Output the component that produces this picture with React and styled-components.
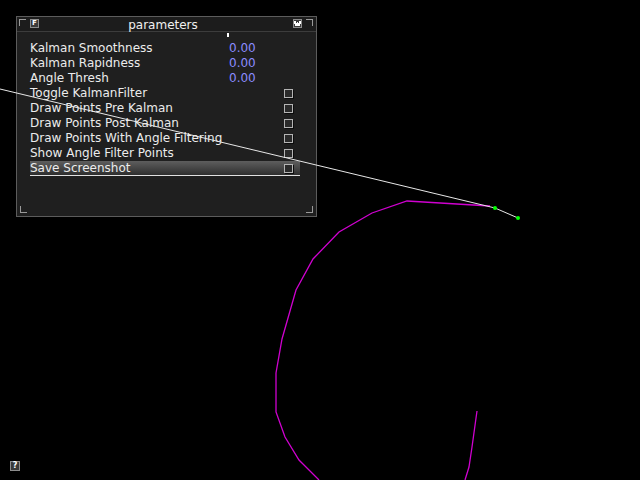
import styled, { createGlobalStyle } from "styled-components";

const GlobalStyle = createGlobalStyle`
  html, body {
    margin: 0;
    padding: 0;
    background: #000;
  }
  body {
    font-family: "DejaVu Sans", "Liberation Sans", sans-serif;
  }
`;

const params = [
  { label: "Kalman Smoothness", value: "0.00" },
  { label: "Kalman Rapidness", value: "0.00" },
  { label: "Angle Thresh", value: "0.00" },
  { label: "Toggle KalmanFilter", check: true },
  { label: "Draw Points Pre Kalman", check: true },
  { label: "Draw Points Post Kalman", check: true },
  { label: "Draw Points With Angle Filtering", check: true },
  { label: "Show Angle Filter Points", check: true },
  { label: "Save Screenshot", check: true, active: true },
];

const curveTop =
  "490,206 407,201 372,213 339,232 313,259 296,290 282,339 276,373 276,412 285,437 299,460 319,480";
const curveRight = "477,411 472,447 469,467 465,480";

export default function App() {
  return (
    <Desktop>
      <GlobalStyle />
      <Panel>
        <Header>
          <Corner $pos="tl" />
          <TinyButton>F</TinyButton>
          <Title>parameters</Title>
          <TinyButton>
            <svg width="7" height="5" viewBox="0 0 7 5">
              <path d="M0 0h2v2h1v-1h1v1h1v-2h2v3h-1v2h-5v-2h-1z" fill="#fff" />
            </svg>
          </TinyButton>
          <Corner $pos="tr" />
        </Header>
        <Tick />
        <List>
          {params.map((p) => (
            <Row key={p.label} $active={p.active}>
              <Label>{p.label}</Label>
              {p.value && <Value>{p.value}</Value>}
              {p.check && <Check />}
            </Row>
          ))}
        </List>
        <Footer>
          <Corner $pos="bl" />
          <Corner $pos="br" />
        </Footer>
      </Panel>
      <HelpButton>?</HelpButton>
      <Drawing width="640" height="480" viewBox="0 0 640 480">
        <polyline points={curveTop} fill="none" stroke="#d000d0" strokeWidth="1.3" />
        <polyline points={curveRight} fill="none" stroke="#d000d0" strokeWidth="1.3" />
        <polyline points="0,89 495,208 518,218" fill="none" stroke="#e8e8e8" strokeWidth="1" />
        <circle cx="495" cy="208" r="2" fill="#00ff00" />
        <circle cx="518" cy="218" r="2" fill="#00ff00" />
      </Drawing>
    </Desktop>
  );
}

const Desktop = styled.div`
  position: relative;
  width: 640px;
  height: 480px;
  background: #000;
  overflow: hidden;
`;

const Panel = styled.div`
  position: absolute;
  left: 16px;
  top: 16px;
  width: 301px;
  height: 201px;
  box-sizing: border-box;
  border: 1px solid #5c5c5c;
  background: #1f1f1f;
  display: flex;
  flex-direction: column;
  color: #ececec;
  font-size: 12px;
`;

const Header = styled.div`
  height: 14px;
  display: flex;
  align-items: flex-start;
  padding: 0 3px 0 2px;
  border-bottom: 1px solid #3c3c3c;
  background: #1c1c1c;
`;

const Corner = styled.span`
  width: 7px;
  height: 7px;
  box-sizing: border-box;
  border-color: #9a9a9a;
  border-style: solid;
  border-width: ${({ $pos }) =>
    $pos === "tl"
      ? "1px 0 0 1px"
      : $pos === "tr"
      ? "1px 1px 0 0"
      : $pos === "bl"
      ? "0 0 1px 1px"
      : "0 1px 1px 0"};
  margin-top: ${({ $pos }) => ($pos === "tl" || $pos === "tr" ? "2px" : "0")};
  flex: none;
`;

const TinyButton = styled.span`
  width: 9px;
  height: 9px;
  box-sizing: border-box;
  border: 1px solid #8c8c8c;
  background: #3a3a3a;
  color: #fff;
  font-size: 7px;
  font-weight: bold;
  line-height: 7px;
  display: flex;
  align-items: center;
  justify-content: center;
  margin: 2px 4px 0 6px;
  flex: none;

  &:nth-of-type(2) {
    margin: 2px 8px 0 4px;
  }
`;

const Title = styled.span`
  flex: 1;
  text-align: center;
  color: #f0f0f0;
  font-size: 12px;
  line-height: 14px;
  padding: 1px 8px 0 0;
`;

const Tick = styled.span`
  position: absolute;
  left: 210px;
  top: 16px;
  width: 2px;
  height: 4px;
  background: #fff;
`;

const List = styled.div`
  flex: 1;
  padding: 9px 16px 0 13px;
  display: flex;
  flex-direction: column;
`;

const Row = styled.div`
  height: 15px;
  display: flex;
  align-items: center;
  position: relative;
  box-sizing: border-box;
  background: ${({ $active }) =>
    $active ? "linear-gradient(to bottom, #5e5e5e, #2e2e2e)" : "transparent"};
  border-bottom: ${({ $active }) => ($active ? "1px solid #e0e0e0" : "none")};
`;

const Label = styled.span`
  flex: 1;
  white-space: nowrap;
  line-height: 15px;
`;

const Value = styled.span`
  width: 71px;
  color: #8c8cff;
  line-height: 15px;
`;

const Check = styled.span`
  width: 9px;
  height: 9px;
  box-sizing: border-box;
  border: 1px solid #b4b4b4;
  background: #2a2a2a;
  box-shadow: 1px 1px 0 #0c0c0c;
  margin-right: 7px;
`;

const Footer = styled.div`
  height: 14px;
  display: flex;
  justify-content: space-between;
  align-items: flex-end;
  padding: 0 3px 3px 3px;
`;

const HelpButton = styled.span`
  position: absolute;
  left: 10px;
  top: 461px;
  width: 10px;
  height: 10px;
  box-sizing: border-box;
  border: 1px solid #8c8c8c;
  background: #3a3a3a;
  color: #fff;
  font-size: 8px;
  font-weight: bold;
  line-height: 8px;
  text-align: center;
`;

const Drawing = styled.svg`
  position: absolute;
  left: 0;
  top: 0;
  pointer-events: none;
`;
